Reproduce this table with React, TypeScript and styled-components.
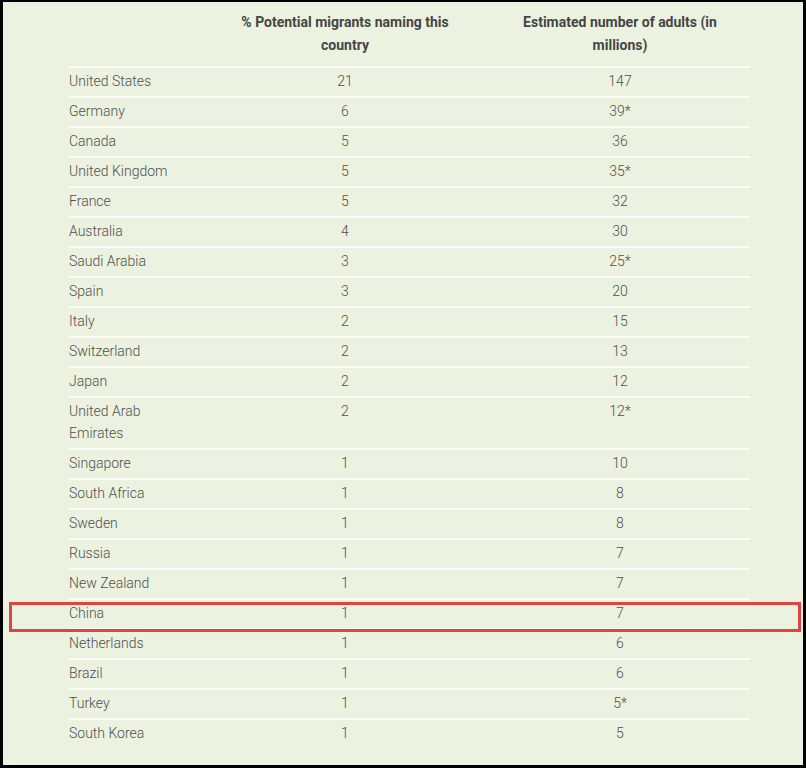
import React from 'react';
import styled, { createGlobalStyle } from 'styled-components';

const GlobalStyle = createGlobalStyle`
  html, body {
    margin: 0;
    padding: 0;
    background: #000;
  }
`;

const Frame = styled.div`
  box-sizing: border-box;
  width: 806px;
  height: 768px;
  border-style: solid;
  border-color: #000;
  border-width: 2px 3px 3px 3px;
  background-color: #ecf2e0;
  padding-left: 66px;
  overflow: hidden;
  font-family: Roboto, "Liberation Sans", sans-serif;
`;

const Grid = styled.div`
  width: 681px;
`;

const Row = styled.div<{ $head?: boolean; $marked?: boolean }>`
  position: relative;
  display: grid;
  grid-template-columns: 131px 290px 260px;
  border-top: ${(p) => (p.$head ? 'none' : '2px solid #fbfdf6')};

  ${(p) =>
    p.$marked &&
    `
    &::after {
      content: '';
      position: absolute;
      z-index: 2;
      top: 2px;
      left: -60px;
      right: -51px;
      height: 30px;
      box-sizing: border-box;
      border: 3px solid #e04343;
      pointer-events: none;
    }
  `}
`;

const HeadCell = styled.div`
  padding: 9px 22px;
  font-size: 14px;
  line-height: 23px;
  font-weight: 700;
  color: #454545;
  text-align: center;
`;

const Cell = styled.div<{ $center?: boolean }>`
  padding: ${(p) => (p.$center ? '2px 12px 4px' : '2px 20px 4px 0')};
  font-size: 14px;
  line-height: 22px;
  font-weight: 300;
  color: #4f4f4f;
  text-align: ${(p) => (p.$center ? 'center' : 'left')};
`;

const rows: [string, string, string][] = [
  ['United States', '21', '147'],
  ['Germany', '6', '39*'],
  ['Canada', '5', '36'],
  ['United Kingdom', '5', '35*'],
  ['France', '5', '32'],
  ['Australia', '4', '30'],
  ['Saudi Arabia', '3', '25*'],
  ['Spain', '3', '20'],
  ['Italy', '2', '15'],
  ['Switzerland', '2', '13'],
  ['Japan', '2', '12'],
  ['United Arab Emirates', '2', '12*'],
  ['Singapore', '1', '10'],
  ['South Africa', '1', '8'],
  ['Sweden', '1', '8'],
  ['Russia', '1', '7'],
  ['New Zealand', '1', '7'],
  ['China', '1', '7'],
  ['Netherlands', '1', '6'],
  ['Brazil', '1', '6'],
  ['Turkey', '1', '5*'],
  ['South Korea', '1', '5'],
];

const App = () => (
  <>
    <GlobalStyle />
    <Frame>
      <Grid>
        <Row $head>
          <HeadCell />
          <HeadCell>% Potential migrants naming this country</HeadCell>
          <HeadCell>Estimated number of adults (in millions)</HeadCell>
        </Row>
        {rows.map(([country, pct, adults]) => (
          <Row key={country} $marked={country === 'China'}>
            <Cell>{country}</Cell>
            <Cell $center>{pct}</Cell>
            <Cell $center>{adults}</Cell>
          </Row>
        ))}
      </Grid>
    </Frame>
  </>
);

export default App;
